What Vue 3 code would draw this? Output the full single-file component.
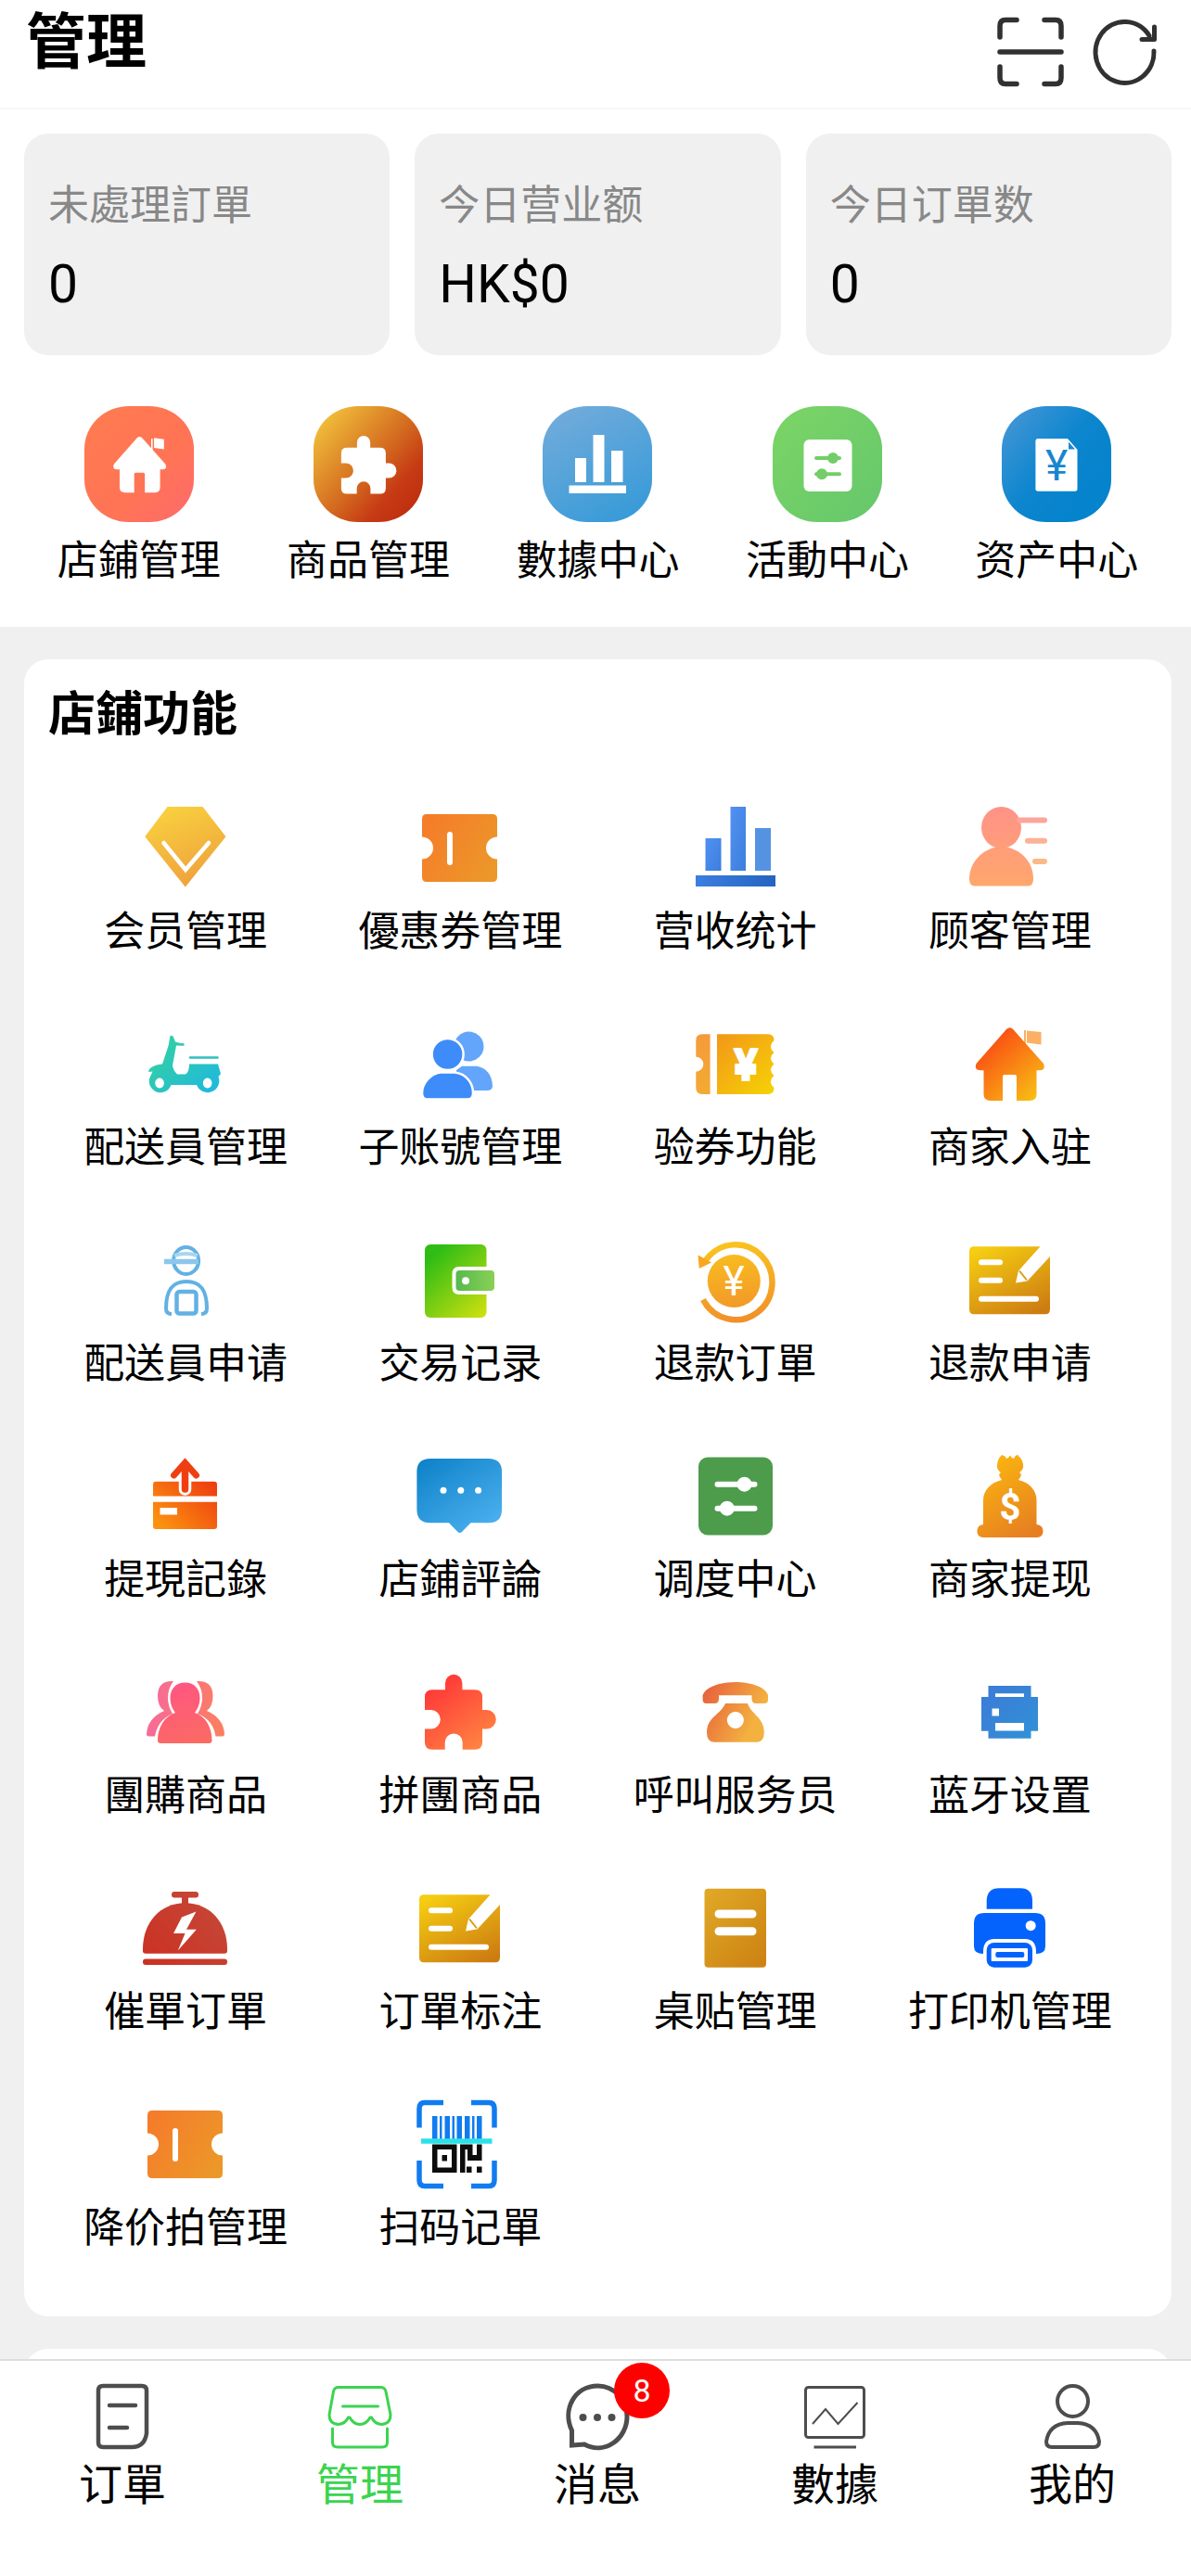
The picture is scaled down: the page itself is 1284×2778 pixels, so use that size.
<template>
  <div class="app">
    <!-- Iconos compartidos -->
    <svg class="sprite" aria-hidden="true">
      <defs>
        <linearGradient id="g-diamond" x1="0" y1="0" x2="0.4" y2="1"><stop offset="0" stop-color="#fad53f" /><stop offset="1" stop-color="#efa43c" /></linearGradient>
        <linearGradient id="g-ticket" x1="0" y1="0.2" x2="1" y2="0.8"><stop offset="0" stop-color="#f57c2a" /><stop offset="1" stop-color="#ec9829" /></linearGradient>
        <linearGradient id="g-bar" x1="0" y1="0" x2="1" y2="1"><stop offset="0" stop-color="#5290f2" /><stop offset="1" stop-color="#3b7fdd" /></linearGradient>
        <linearGradient id="g-base" x1="0" y1="0" x2="1" y2="0"><stop offset="0" stop-color="#3c7fe0" /><stop offset="1" stop-color="#2563c0" /></linearGradient>
        <linearGradient id="g-customer" gradientUnits="userSpaceOnUse" x1="50" y1="8" x2="50" y2="95"><stop offset="0" stop-color="#ff9288" /><stop offset="1" stop-color="#ffa76c" /></linearGradient>
        <linearGradient id="g-scooter" gradientUnits="userSpaceOnUse" x1="20" y1="25" x2="85" y2="85"><stop offset="0" stop-color="#34d1a0" /><stop offset="1" stop-color="#1fb8e0" /></linearGradient>
        <linearGradient id="g-coupon" gradientUnits="userSpaceOnUse" x1="32" y1="22" x2="94" y2="86"><stop offset="0" stop-color="#f39719" /><stop offset="1" stop-color="#f5d305" /></linearGradient>
        <linearGradient id="g-coupon2" x1="0" y1="0" x2="0" y2="1"><stop offset="0" stop-color="#f69a3b" /><stop offset="1" stop-color="#f2ab33" /></linearGradient>
        <linearGradient id="g-house" gradientUnits="userSpaceOnUse" x1="28" y1="30" x2="84" y2="92"><stop offset="0" stop-color="#fa4f14" /><stop offset="1" stop-color="#f8c414" /></linearGradient>
        <linearGradient id="g-wallet" x1="0.2" y1="0.1" x2="0.9" y2="1"><stop offset="0" stop-color="#2fbd15" /><stop offset="1" stop-color="#cbdf10" /></linearGradient>
        <linearGradient id="g-pocket" x1="0" y1="0" x2="1" y2="0"><stop offset="0" stop-color="#57b94d" /><stop offset="1" stop-color="#8ad055" /></linearGradient>
        <linearGradient id="g-coin" gradientUnits="userSpaceOnUse" x1="45" y1="10" x2="55" y2="98"><stop offset="0" stop-color="#fac51e" /><stop offset="1" stop-color="#f1902a" /></linearGradient>
        <linearGradient id="g-note" x1="0.2" y1="0" x2="0.8" y2="1"><stop offset="0" stop-color="#f5cd12" /><stop offset="1" stop-color="#cd7c12" /></linearGradient>
        <linearGradient id="g-record" gradientUnits="userSpaceOnUse" x1="24" y1="86" x2="76" y2="34"><stop offset="0" stop-color="#fb9310" /><stop offset="1" stop-color="#ef3d10" /></linearGradient>
        <linearGradient id="g-bubble" x1="0" y1="0" x2="0.8" y2="1"><stop offset="0" stop-color="#0c80c8" /><stop offset="1" stop-color="#4bb0ee" /></linearGradient>
        <linearGradient id="g-bag" x1="0.2" y1="0" x2="0.7" y2="1"><stop offset="0" stop-color="#fbb70f" /><stop offset="1" stop-color="#e67f22" /></linearGradient>
        <linearGradient id="g-group" gradientUnits="userSpaceOnUse" x1="40" y1="20" x2="60" y2="88"><stop offset="0" stop-color="#ff5583" /><stop offset="1" stop-color="#fb6a63" /></linearGradient>
        <linearGradient id="g-groupL" gradientUnits="userSpaceOnUse" x1="10" y1="70" x2="92" y2="80"><stop offset="0" stop-color="#f76a98" /><stop offset="1" stop-color="#fb7f5f" /></linearGradient>
        <linearGradient id="g-puzzle" x1="0.2" y1="0" x2="0.9" y2="1"><stop offset="0" stop-color="#ff3338" /><stop offset="1" stop-color="#ff8a42" /></linearGradient>
        <linearGradient id="g-phone" gradientUnits="userSpaceOnUse" x1="18" y1="32" x2="74" y2="60"><stop offset="0" stop-color="#e8623c" /><stop offset="1" stop-color="#f3b140" /></linearGradient>
        <linearGradient id="g-bt" x1="0" y1="0" x2="1" y2="1"><stop offset="0" stop-color="#3c7ad8" /><stop offset="1" stop-color="#3192d6" /></linearGradient>
        <linearGradient id="g-bell" gradientUnits="userSpaceOnUse" x1="6" y1="93" x2="97" y2="14"><stop offset="0" stop-color="#cb3022" /><stop offset="1" stop-color="#c54a3a" /></linearGradient>
        <linearGradient id="g-sticker" x1="0" y1="0" x2="0.8" y2="1"><stop offset="0" stop-color="#e0aa26" /><stop offset="1" stop-color="#cd8413" /></linearGradient>
        <linearGradient id="g-top1" x1="0" y1="0" x2="1" y2="1"><stop offset="0" stop-color="#ff7b50" /><stop offset="0.6" stop-color="#ff7455" /><stop offset="1" stop-color="#ff6a6c" /></linearGradient>
        <linearGradient id="g-top2" x1="0.05" y1="0.1" x2="0.9" y2="0.9"><stop offset="0" stop-color="#f2c23b" /><stop offset="0.55" stop-color="#d3681f" /><stop offset="0.8" stop-color="#c63a14" /><stop offset="1" stop-color="#bf2f10" /></linearGradient>
        <linearGradient id="g-top3" x1="0.2" y1="0" x2="0.7" y2="1"><stop offset="0" stop-color="#72abdb" /><stop offset="1" stop-color="#389bd8" /></linearGradient>
        <linearGradient id="g-top4" x1="0" y1="0" x2="1" y2="1"><stop offset="0" stop-color="#7cd565" /><stop offset="1" stop-color="#65c76c" /></linearGradient>
        <linearGradient id="g-top5" x1="0" y1="0.1" x2="0.75" y2="0.75"><stop offset="0" stop-color="#4596d6" /><stop offset="0.6" stop-color="#0d86ce" /><stop offset="1" stop-color="#0583cc" /></linearGradient>

        <path id="house-shape" d="M48 16 Q51.6 12.6 55.2 16 L88 53 Q91 60.3 84 60.3 H80.5 V86 Q80.5 93 73 93 H59 V67 Q59 65 57 65 H46 Q44 65 44 67 V93 H31 Q23.5 93 23.5 86 V60.3 H20 Q12.5 60.3 15.5 53 Z" />
        <path id="puzzle-shape" d="M22 29.3 H36 V22 A9.2 9.2 0 0 1 54.4 22 V29.3 H68 Q76 29.3 76 37 V51 H80.5 A10.3 10.3 0 0 1 80.5 71.6 H76 V86 Q76 93.7 68 93.7 H54.7 V86 A9.5 9.5 0 0 0 35.7 86 V93.7 H22 Q14 93.7 14 86 V71.6 H20.5 A10.3 10.3 0 0 0 20.5 51 H14 V37 Q14 29.3 22 29.3 Z" />
      </defs>

      <symbol id="i-shop" viewBox="0 0 118 125">
        <rect width="118" height="125" rx="48" ry="46" fill="url(#g-top1)" />
        <g fill="#fff" transform="translate(20 22) scale(.765)"><use href="#house-shape" /><path d="M68 17 h2 v16 h-2z M72 16 l14 2 v14 l-14-2z" /></g>
      </symbol>
      <symbol id="i-goods" viewBox="0 0 118 125">
        <rect width="118" height="125" rx="48" ry="46" fill="url(#g-top2)" />
        <use href="#puzzle-shape" fill="#fff" transform="translate(19 22) scale(.775)" />
      </symbol>
      <symbol id="i-data" viewBox="0 0 118 125">
        <rect width="118" height="125" rx="48" ry="46" fill="url(#g-top3)" />
        <path fill="#fff" d="M35 56 h12 v26 h-12z M54.5 31 h12 v51 h-12z M74 48 h12.5 v34 h-12.5z M28.5 85.5 h61.5 v8.5 h-61.5z" />
      </symbol>
      <symbol id="i-activity" viewBox="0 0 118 125">
        <rect width="118" height="125" rx="48" ry="46" fill="url(#g-top4)" />
        <rect x="33.5" y="36" width="52" height="56" rx="6" fill="#fff" />
        <g stroke="#73cd68" fill="#73cd68" stroke-width="4" stroke-linecap="round"><path d="M47 56 H72 M47 73.3 H72" /><circle cx="65" cy="56" r="4" /><circle cx="53" cy="73.3" r="4" /></g>
      </symbol>
      <symbol id="i-asset" viewBox="0 0 118 125">
        <rect width="118" height="125" rx="48" ry="46" fill="url(#g-top5)" />
        <path fill="#fff" d="M39 35 H71 L81.5 47 V89 Q81.5 91.7 79 91.7 H39 Q36.4 91.7 36.4 89 V38 Q36.4 35 39 35Z" />
        <path fill="#1c88cf" d="M72 38.5 V46.5 H79Z" />
      </symbol>

      <symbol id="i-member" viewBox="0 0 104 104">
        <path fill="url(#g-diamond)" d="M32.5 9 H70.5 L95.5 41.3 L51.8 95.5 L8.2 41.3Z" />
        <path d="M28.5 48 L52 77 L77 48" fill="none" stroke="#fff" stroke-width="4.5" stroke-linecap="round" />
      </symbol>
      <symbol id="i-ticket" viewBox="0 0 104 104">
        <path fill="url(#g-ticket)" d="M16 17 H87 Q92 17 92 22 V41.5 A12 12 0 0 0 92 65.5 V85 Q92 90 87 90 H16 Q11 90 11 85 V65.5 A12 12 0 0 0 11 41.5 V22 Q11 17 16 17Z" />
        <path d="M41 39 V69" stroke="#fff" stroke-width="6" stroke-linecap="round" />
      </symbol>
      <symbol id="i-revenue" viewBox="0 0 104 104">
        <rect x="19.5" y="43" width="17" height="35" fill="url(#g-bar)" />
        <rect x="46.5" y="9" width="16.5" height="69" fill="url(#g-bar)" />
        <rect x="73" y="32" width="17" height="46" fill="#5592e2" />
        <rect x="9" y="83" width="86" height="12" fill="url(#g-base)" />
      </symbol>
      <symbol id="i-customer" viewBox="0 0 104 104">
        <g fill="url(#g-customer)"><ellipse cx="42.5" cy="31.5" rx="21.5" ry="22.5" /><path d="M35 53 H50 C66 57 77 70 77 87 Q77 94.5 71 94.5 H14 Q8 94.5 8 87 C8 70 20 57 35 53Z" /></g>
        <g stroke-width="6" stroke-linecap="round"><path d="M62 23.5 H89" stroke="#fba69c" /><path d="M71 45.7 H89" stroke="#fbb295" /><path d="M79 68 H89" stroke="#fbb98a" /></g>
      </symbol>
      <symbol id="i-scooter" viewBox="0 0 104 104">
        <path fill="url(#g-scooter)" fill-rule="evenodd" d="M35.5 23 Q38 22 39 24.5 L41 29.5 Q45 31.3 50.5 31.3 V33.8 L42 33.5 L38 55 Q38.5 60 43 64.5 H52 Q56 62 56 53.5 H87 L90 64 L87.5 67 A12.2 12.2 0 1 1 64 76 H36.5 A12.2 12.2 0 1 1 15 65 L16.5 61.5 L12 62 Q13 55 27 53.5 L33.5 34Z M24 68.5 a4.8 5.5 0 1 0 .1 0Z M75.6 68.5 a4.8 5.5 0 1 0 .1 0Z" />
        <path d="M57 46.5 H86.5" stroke="#2fc0bf" stroke-width="2.6" stroke-linecap="round" />
      </symbol>
      <symbol id="i-subaccount" viewBox="0 0 104 104">
        <g fill="#62a5fb"><circle cx="61.5" cy="34.5" r="16" /><path d="M54 55.7 H70 Q86 59 87 77 Q87 82 81 82 H48 V60Z" /></g>
        <g fill="#3e8cf9" stroke="#fff" stroke-width="2.5"><circle cx="38.6" cy="43" r="17" /><path d="M31 62.5 H46 C59 64 66 74 66 85 Q66 91.5 60 91.5 H17 Q11 91.5 11 85 C11 74 20 64 31 62.5Z" /></g>
      </symbol>
      <symbol id="i-verify" viewBox="0 0 104 104">
        <path fill="url(#g-coupon2)" d="M24.6 21.3 V86 H16 Q9.3 86 9.3 79 V61.7 A8 8 0 0 0 9.3 45.7 V28 Q9.3 21.3 16 21.3Z" />
        <path fill="url(#g-coupon)" d="M32 21.3 H87 Q93.5 21.3 93.5 28 Q90 31 90 34.5 Q90 38 93.5 41 Q90 44 90 47 Q90 50 93.5 53.5 Q90 56.5 90 60 Q90 63 93.5 66 Q90 69 90 72.5 Q90 76 93.5 79 Q93.5 86 87 86 H32Z" />
      </symbol>
      <symbol id="i-house" viewBox="0 0 104 104">
        <path d="M67 17 h2 v15 h-2z M70 17.5 l15.5 1.5 v13.5 l-15.5-2z" fill="#fbb064" />
        <use href="#house-shape" fill="url(#g-house)" />
      </symbol>
      <symbol id="i-rider" viewBox="0 0 104 104">
        <g fill="none" stroke="#62b1e4" stroke-width="4">
          <ellipse cx="52.6" cy="32.5" rx="13.5" ry="14.5" />
          <path d="M29 33.5 H66" stroke-width="5.5" stroke="#8cc6ec" />
          <path d="M40 27 Q52 23 65 27" stroke="#a9d5f2" />
          <path d="M37 90 Q31 90 31 84 C31 64 38 55 53 55 C68 55 75 64 75 84 Q75 90 69 90" />
          <rect x="42.5" y="66" width="21" height="23.5" rx="3" stroke-width="4.5" />
        </g>
      </symbol>
      <symbol id="i-wallet" viewBox="0 0 104 104">
        <rect x="14" y="15" width="66.5" height="79" rx="6" fill="url(#g-wallet)" />
        <path d="M84 39 H51 Q43.5 39 43.5 47 V61 Q43.5 69 51 69 H84Z" fill="#fff" />
        <rect x="47.5" y="43" width="41.5" height="22" rx="4" fill="url(#g-pocket)" />
        <circle cx="58" cy="54.2" r="4" fill="#fff" />
      </symbol>
      <symbol id="i-refund" viewBox="0 0 104 104">
        <circle cx="50.3" cy="54.5" r="28.5" fill="url(#g-coin)" />
        <path d="M20 32 A39.5 40.5 0 1 1 17 74.5" fill="none" stroke="url(#g-coin)" stroke-width="6.5" />
        <path d="M11.5 26.5 L26 34.5 L12.8 41Z" fill="#f9a61e" />
      </symbol>
      <symbol id="i-note" viewBox="0 0 104 104">
        <path fill="url(#g-note)" d="M13 17.3 H84.5 L61 43.5 L58 56.5 L70.5 54.5 L95 28 V85 Q95 90.3 90 90.3 H13 Q8 90.3 8 85 V22.5 Q8 17.3 13 17.3Z" />
        <path d="M62 43.5 L70 53.5" stroke="#d89d12" stroke-width="2" />
        <path d="M21 34.3 H41 M21 53.7 H41 M21 73.7 H80" stroke="#fff" stroke-width="6" stroke-linecap="round" />
      </symbol>
      <symbol id="i-withdraw" viewBox="0 0 104 104">
        <path fill="url(#g-record)" d="M20 37.7 H83 Q86 37.7 86 41 V53.5 H17 V41 Q17 37.7 20 37.7Z M17 59.7 H86 V86 Q86 89 83 89 H20 Q17 89 17 86Z" />
        <rect x="24.5" y="66" width="18.5" height="7.5" fill="#fff" />
        <path d="M51.5 36 V46" stroke="#fff" stroke-width="13.5" stroke-linecap="round" />
        <path d="M51.5 22 V46" stroke="#ef3f12" stroke-width="7.5" stroke-linecap="round" />
        <path d="M39.5 31 L51.5 17.5 L63.5 31" fill="none" stroke="#ef3f12" stroke-width="7" stroke-linecap="round" />
      </symbol>
      <symbol id="i-comment" viewBox="0 0 104 104">
        <path fill="url(#g-bubble)" d="M20 13 H82.5 Q97 13 97 27 V68 Q97 82.3 82.5 82.3 H63.5 L54 92 Q51.7 94 49.5 92 L40 82.3 H20 Q5.4 82.3 5.4 68 V27 Q5.4 13 20 13Z" />
        <g fill="#fff"><circle cx="34" cy="47.3" r="3.5" /><circle cx="52.8" cy="47.3" r="3.5" /><circle cx="71.6" cy="47.3" r="3.5" /></g>
      </symbol>
      <symbol id="i-dispatch" viewBox="0 0 104 104">
        <rect x="12" y="11.5" width="80" height="84" rx="10" fill="#4d9c4b" />
        <g stroke="#fff" fill="#fff" stroke-width="6" stroke-linecap="round"><path d="M32.5 40.7 H72.5 M32.5 66.7 H72.5" /><circle cx="61.5" cy="40.7" r="5" /><circle cx="42.8" cy="66.7" r="5" /></g>
      </symbol>
      <symbol id="i-bag" viewBox="0 0 104 104">
        <path fill="url(#g-bag)" d="M43 9 Q47 10 48 13 Q50 13 52 9.5 Q54 13 56 13 Q57.5 9 60.5 9 Q61.5 12 63 12 Q67 18 66 23 Q65 26 62 28 Q65 30 63 33 L61 36 C74 39 80.5 48 80.5 58 V84 Q87.5 85 87.5 91 Q87.5 98 81 98 H23 Q16.4 98 16.4 91 Q16.4 85 23 84 V58 C23 48 30 39 43 36 L41 33 Q39 30 42 28 Q39 26 38 23 Q37.5 14 43 9Z" />
      </symbol>
      <symbol id="i-group" viewBox="0 0 104 104">
        <g fill="url(#g-groupL)">
          <path d="M39 20 Q22 19 22 36 Q22 47 29 52 Q11 60 10 77 Q10 79.5 13 79.5 H19 Q22 62 38 55 Q33 47 33 38 Q33 28 39 20Z" />
          <path d="M64 20 Q81.5 19 81.5 36 Q81.5 47 75 52 Q93 60 94 77 Q94 79.5 91 79.5 H84.5 Q82 62 65 55 Q70 47 70 38 Q70 28 64 20Z" />
        </g>
        <path fill="url(#g-group)" d="M51.5 21.5 C62 21.5 67.5 29 67.5 38 C67.5 45 65 50 62 54 C74 58 80.5 70 80.5 84 Q80.5 87 77 87 H25.5 Q22 87 22 84 C22 70 29 58 41 54 C38 50 35.5 45 35.5 38 C35.5 29 41 21.5 51.5 21.5Z" />
      </symbol>
      <symbol id="i-puzzle" viewBox="0 0 104 104"><use href="#puzzle-shape" fill="url(#g-puzzle)" /></symbol>
      <symbol id="i-phone" viewBox="0 0 104 104">
        <g fill="url(#g-phone)" fill-rule="evenodd">
          <path d="M16.6 35 C20 26 36 21 51.8 21 C68 21 84 26 87 35 V40 Q87 44 83 44 H74 Q69.5 44 69.5 39 V35.3 H34 V39 Q34 44 29.5 44 H20.5 Q16.6 44 16.6 40Z" />
          <path d="M41 44 H65 C69 56 82.8 59 82.8 75 Q82.8 85.7 75 85.7 H29 Q21 85.7 21 75 C21 59 36 56 41 44Z M51.8 53 a9 9 0 1 0 .1 0Z" />
        </g>
      </symbol>
      <symbol id="i-bluetooth" viewBox="0 0 104 104">
        <path fill="url(#g-bt)" fill-rule="evenodd" d="M28.5 25 H74.5 V37 H82 V73.7 H74.5 V81.7 H28.5 V73.7 H21 V37 H28.5Z M36 33.3 V37 H67 V33.3Z M32.5 49.5 V57.5 H40 V49.5Z M36 65 V73.5 H67 V65Z" />
      </symbol>
      <symbol id="i-bell" viewBox="0 0 104 104">
        <g fill="url(#g-bell)"><rect x="37" y="14" width="29" height="6.5" rx="3" /><rect x="48" y="18" width="7" height="12" /><path d="M51.5 26.3 C78 26.3 97 47 97 76 V78 Q97 80.7 94 80.7 H9 Q6 80.7 6 78 V76 C6 47 25 26.3 51.5 26.3Z" /><rect x="6" y="86.5" width="91" height="6.5" rx="3" /></g>
        <path fill="#fff" d="M63.5 35.5 L48 41.5 L39 59 H51.5 L43.8 77.5 L63.8 54.7 H53Z" />
      </symbol>
      <symbol id="i-sticker" viewBox="0 0 104 104">
        <rect x="18.5" y="10.7" width="66.5" height="85" rx="4" fill="url(#g-sticker)" />
        <path d="M34 38 H70 M34 56.7 H70" stroke="#fff" stroke-width="9" stroke-linecap="round" />
      </symbol>
      <symbol id="i-printer" viewBox="0 0 104 104">
        <g fill="#0563fd"><path d="M26.7 32.7 V24 Q27 10.3 40 10.3 H63 Q76 10.3 76 24 V32.7Z" /><path d="M24 37 H79 Q90 37 90 48 V73 Q90 81 80 81 V79 Q80 65 68 65 H35 Q23 65 23 79 V81 Q13 81 13 73 V48 Q13 37 24 37Z" /><rect x="26.7" y="69" width="49.3" height="26.7" rx="8" /></g>
        <circle cx="74.2" cy="50.7" r="5.5" fill="#fff" />
        <rect x="31.7" y="75" width="39.3" height="14" rx="1" fill="#fff" /><rect x="36.3" y="79" width="31" height="6" rx="2" fill="#0563fd" />
      </symbol>
      <symbol id="i-scancode" viewBox="0 0 104 104">
        <path d="M34 8.5 H14 Q8 8.5 8 15 V35.5 M64 8.5 H83 Q89 8.5 89 15 V35.5 M8 71 V92 Q8 98.5 14 98.5 H34 M89 71 V92 Q89 98.5 83 98.5 H64" fill="none" stroke="#117bf0" stroke-width="5.5" />
        <path fill="#117bf0" d="M22 23 h5.5 v25 h-5.5z M30 23 h2.5 v25 h-2.5z M35.5 23 h5.5 v25 h-5.5z M43.5 23 h2.5 v25 h-2.5z M48.5 23 h5.5 v25 h-5.5z M57 23 h5.5 v25 h-5.5z M65 23 h2.5 v25 h-2.5z M70 23 h5.5 v25 h-5.5z" />
        <path fill="#0c0c0c" fill-rule="evenodd" d="M22 53.5 H48.5 V84 H22Z M27.5 59 V78.5 H43 V59Z M32.5 65 h5.5 v6.5 h-5.5z M52 53.5 H65.5 V65 H70 V53.5 H75.5 V71 H60 V59 H57.5 V84 H52Z M59 77.5 h5.5 v6.5 h-5.5z M70 77.5 h5.5 v6.5 h-5.5z" />
        <path d="M10 50 H86.5" stroke="#2be1e8" stroke-width="5.5" />
      </symbol>

      <symbol id="t-order" viewBox="0 0 76 76">
        <g fill="none" stroke="#4d4d4d" stroke-width="4.5" stroke-linecap="round"><path d="M17 5 H59 Q64 5 64 10 V56 Q62 71 48 71 H17 Q12 71 12 66 V10 Q12 5 17 5Z" /><path d="M24 26 H52 M24 50 H43" /></g>
      </symbol>
      <symbol id="t-manage" viewBox="0 0 76 76">
        <g fill="none" stroke="#3bd450" stroke-width="3" stroke-linecap="round" stroke-linejoin="round"><path d="M15 6.5 H60 Q65 6.5 66 11 L71 36 Q71 46 61 46.5 Q54 46 50.5 39 H49 Q45 46.5 38 46.5 Q31 46.5 27 39 H25.5 Q22 46 15 46.5 Q5 46 5 36 L9.5 11 Q10.5 6.5 15 6.5Z" /><path d="M19.5 27 H57.5 M8.5 51 V66 Q8.5 71 14 71 H62 Q67.5 71 67.5 66 V51" /></g>
      </symbol>
      <symbol id="t-message" viewBox="0 0 76 76">
        <path d="M10.5 69 V53 C0 31 13 5 38.5 5 C56 5 70 20 70 38 C70 62 46 80 24 68 Z" fill="none" stroke="#4d4d4d" stroke-width="5" />
        <g fill="#4d4d4d"><circle cx="22.5" cy="39" r="4" /><circle cx="38" cy="39" r="4" /><circle cx="53.5" cy="39" r="4" /></g>
      </symbol>
      <symbol id="t-chart" viewBox="0 0 76 76">
        <g fill="none" stroke="#4d4d4d" stroke-width="3"><rect x="6.5" y="6.5" width="63" height="54" rx="3" /><path d="M15.5 71 H61" /><path d="M14 46 L28 30 L41.5 46 L62.5 23" stroke-width="2" /></g>
      </symbol>
      <symbol id="t-user" viewBox="0 0 76 76">
        <g fill="none" stroke="#4d4d4d" stroke-width="4"><circle cx="38.5" cy="21.5" r="16.5" /><path d="M33 45 H44 Q64 46 67 65 Q67 71 61 71 H16 Q10 71 10 65 Q13 46 33 45Z" /></g>
      </symbol>
    </svg>

    <header class="header">
      <h1 class="header-title">管理</h1>
      <div class="header-actions">
        <button type="button" class="btn-icon" aria-label="扫码">
          <svg viewBox="0 0 76 76" fill="none" stroke="#303133" stroke-width="5.5" stroke-linecap="round">
            <path d="M5 22 V10 Q5 3.5 11 3.5 H23 M53 3.5 H65 Q71 3.5 71 10 V22 M5 54 V66 Q5 72.5 11 72.5 H23 M53 72.5 H65 Q71 72.5 71 66 V54 M5 38 H71" />
          </svg>
        </button>
        <button type="button" class="btn-icon" aria-label="刷新">
          <svg viewBox="0 0 76 76" fill="none" stroke="#303133" stroke-width="5" stroke-linecap="round" stroke-linejoin="round">
            <path d="M70 37 A31.5 33 0 1 1 65 20.5" /><path d="M70.5 11 V24.5 H57" />
          </svg>
        </button>
      </div>
    </header>

    <main class="content">
      <section class="overview">
        <div class="stats">
          <div v-for="stat in stats" :key="stat.label" class="stat">
            <span class="stat-label">{{ stat.label }}</span>
            <span class="stat-value">{{ stat.value }}</span>
          </div>
        </div>
        <div class="shortcuts">
          <button v-for="item in shortcuts" :key="item.label" type="button" class="shortcut">
            <svg class="shortcut-icon" aria-hidden="true">
              <use :href="'#i-' + item.icon" />
              <text v-if="item.glyph" class="glyph glyph-asset" x="59" y="80">{{ item.glyph }}</text>
            </svg>
            <span class="item-label">{{ item.label }}</span>
          </button>
        </div>
      </section>

      <section class="card">
        <h2 class="card-title">店鋪功能</h2>
        <div class="features">
          <button v-for="item in features" :key="item.label" type="button" class="feature">
            <svg class="feature-icon" aria-hidden="true">
              <use :href="'#i-' + item.icon" />
              <text v-if="item.glyph" class="glyph" :class="'glyph-' + item.icon" :x="item.gx" :y="item.gy">{{ item.glyph }}</text>
            </svg>
            <span class="item-label">{{ item.label }}</span>
          </button>
        </div>
      </section>

      <section class="card card-empty"></section>
    </main>

    <nav class="tabbar">
      <button
        v-for="tab in tabs"
        :key="tab.id"
        type="button"
        class="tab"
        :class="{ active: tab.id === activeTab }"
        @click="activeTab = tab.id"
      >
        <span class="tab-icon-wrap">
          <svg class="tab-icon" aria-hidden="true"><use :href="'#t-' + tab.id" /></svg>
          <span v-if="tab.badge" class="badge">{{ tab.badge }}</span>
        </span>
        <span class="tab-label">{{ tab.label }}</span>
      </button>
    </nav>
  </div>
</template>

<script setup>
import { ref } from 'vue';

const activeTab = ref('manage');

const stats = ref([
  { label: '未處理訂單', value: '0' },
  { label: '今日营业额', value: 'HK$0' },
  { label: '今日订單数', value: '0' },
]);

const shortcuts = [
  { label: '店鋪管理', icon: 'shop' },
  { label: '商品管理', icon: 'goods' },
  { label: '數據中心', icon: 'data' },
  { label: '活動中心', icon: 'activity' },
  { label: '资产中心', icon: 'asset', glyph: '¥' },
];

// gx / gy: posición del símbolo de moneda dentro del icono
const features = [
  { label: '会员管理', icon: 'member' },
  { label: '優惠券管理', icon: 'ticket' },
  { label: '营收统计', icon: 'revenue' },
  { label: '顾客管理', icon: 'customer' },
  { label: '配送員管理', icon: 'scooter' },
  { label: '子账號管理', icon: 'subaccount' },
  { label: '验券功能', icon: 'verify', glyph: '¥', gx: 63, gy: 71 },
  { label: '商家入驻', icon: 'house' },
  { label: '配送員申请', icon: 'rider' },
  { label: '交易记录', icon: 'wallet' },
  { label: '退款订單', icon: 'refund', glyph: '¥', gx: 50, gy: 70 },
  { label: '退款申请', icon: 'note' },
  { label: '提現記錄', icon: 'withdraw' },
  { label: '店鋪評論', icon: 'comment' },
  { label: '调度中心', icon: 'dispatch' },
  { label: '商家提现', icon: 'bag', glyph: '$', gx: 52, gy: 79 },
  { label: '團購商品', icon: 'group' },
  { label: '拼團商品', icon: 'puzzle' },
  { label: '呼叫服务员', icon: 'phone' },
  { label: '蓝牙设置', icon: 'bluetooth' },
  { label: '催單订單', icon: 'bell' },
  { label: '订單标注', icon: 'note' },
  { label: '桌贴管理', icon: 'sticker' },
  { label: '打印机管理', icon: 'printer' },
  { label: '降价拍管理', icon: 'ticket' },
  { label: '扫码记單', icon: 'scancode' },
];

const tabs = ref([
  { id: 'order', label: '订單' },
  { id: 'manage', label: '管理' },
  { id: 'message', label: '消息', badge: 8 },
  { id: 'chart', label: '數據' },
  { id: 'user', label: '我的' },
]);
</script>

<style>
body { margin: 0; background: #f0f0f0; }
</style>

<style scoped>
.app { display: flex; flex-direction: column; height: 100vh; overflow: hidden; background: #f0f0f0; color: #000; font-family: Roboto, "Noto Sans CJK SC", "Noto Sans CJK TC", sans-serif; }
.sprite { position: absolute; width: 0; height: 0; }
button { border: none; background: none; padding: 0; margin: 0; font: inherit; color: inherit; cursor: pointer; }

/* Símbolos de moneda de los iconos */
.glyph { font-family: Roboto, sans-serif; text-anchor: middle; fill: #fff; }
.glyph-asset { font-size: 46px; fill: #1886ce; }
.glyph-verify { font-size: 48px; font-weight: 700; stroke: #fff; stroke-width: 2px; stroke-linejoin: round; }
.glyph-refund { font-size: 44px; }
.glyph-bag { font-size: 40px; font-weight: 700; }

/* Cabecera */
.header { display: flex; justify-content: space-between; align-items: flex-start; flex-shrink: 0; padding: 0 34px 22px 28px; background: #fff; border-bottom: 2px solid #f7f7f7; }
.header-title { margin: 0; font-size: 65px; line-height: 92px; font-weight: 700; }
.header-actions { display: flex; gap: 25px; padding-top: 18px; }
.btn-icon { width: 76px; height: 76px; }
.btn-icon svg { display: block; width: 76px; height: 76px; }

.content { flex: 1; min-height: 0; overflow-y: auto; scrollbar-width: none; }

/* Resumen y accesos directos */
.overview { padding: 26px 21px 47px 26px; background: #fff; }
.stats { display: grid; grid-template-columns: repeat(3, 1fr); gap: 27px; }
.stat { display: flex; flex-direction: column; gap: 27px; padding: 52px 26px 44px; border-radius: 26px; background: #f0f0f0; }
.stat-label { font-size: 44px; line-height: 52px; color: #888; }
.stat-value { font-size: 57px; line-height: 64px; }
.shortcuts { display: grid; grid-template-columns: repeat(5, 1fr); margin-top: 55px; }
.shortcut { display: flex; flex-direction: column; align-items: center; gap: 18px; }
.shortcut-icon { width: 118px; height: 125px; }
.item-label { font-size: 44px; line-height: 48px; white-space: nowrap; }

/* Funciones de la tienda */
.card { margin: 35px 21px 0 26px; padding: 30px 26px 71px; border-radius: 26px; background: #fff; }
.card-title { margin: 0 0 60px; font-size: 51px; line-height: 60px; font-weight: 700; }
.features { display: grid; grid-template-columns: repeat(4, 1fr); row-gap: 65px; }
.feature { display: flex; flex-direction: column; align-items: center; gap: 16px; }
.feature-icon { width: 104px; height: 104px; }
.card-empty { min-height: 200px; }

/* Barra inferior */
.tabbar { display: grid; grid-template-columns: repeat(5, 1fr); flex-shrink: 0; padding: 22px 0 72px 4px; border-top: 2px solid #dedede; background: #fff; }
.tab { display: flex; flex-direction: column; align-items: center; gap: 10px; }
.tab.active { color: #3bd450; }
.tab-icon-wrap { position: relative; width: 76px; height: 76px; }
.tab-icon { display: block; width: 76px; height: 76px; }
.tab-label { font-size: 47px; line-height: 52px; }
.badge { position: absolute; top: -20px; right: -40px; width: 60px; height: 60px; border-radius: 50%; background: #f00; color: #fff; font-size: 34px; line-height: 60px; text-align: center; }
</style>
